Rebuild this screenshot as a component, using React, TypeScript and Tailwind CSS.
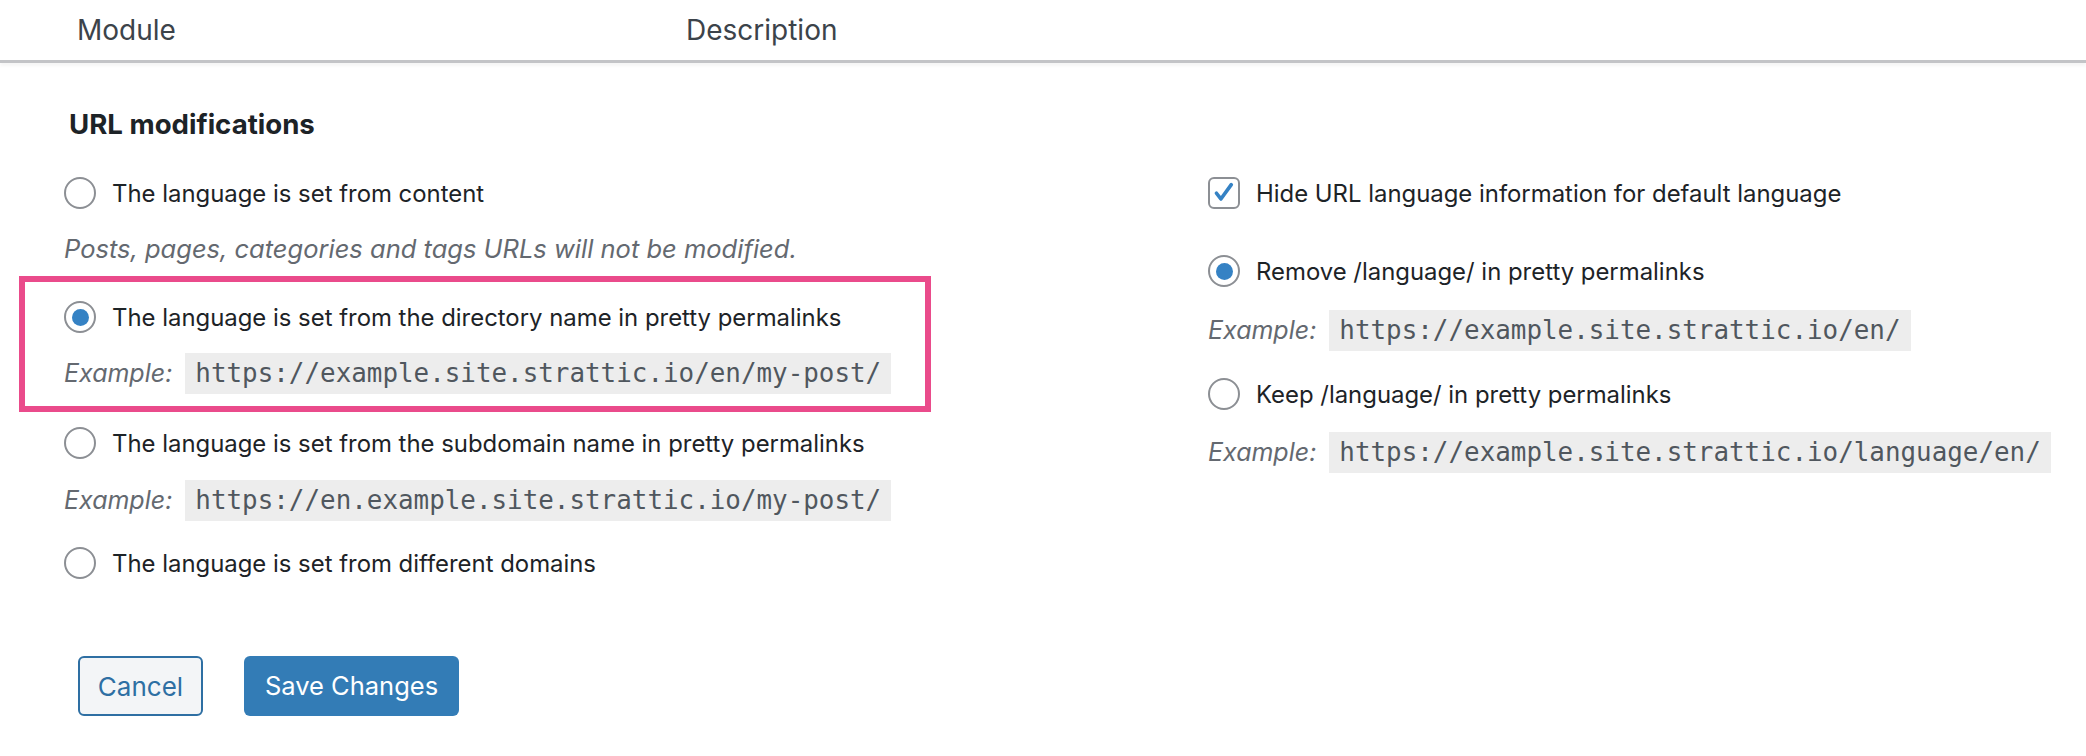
import React from "react";

const Radio = ({ checked = false }: { checked?: boolean }) => (
    <span className="w-[32px] h-[32px] shrink-0 rounded-full border-2 border-[#8c8f94] bg-white flex items-center justify-center">
        {checked && <span className="w-[17px] h-[17px] rounded-full bg-[#3582c4]" />}
    </span>
);

const Checkbox = () => (
    <span className="w-[32px] h-[32px] shrink-0 rounded-[6px] border-2 border-[#8c8f94] bg-white flex items-center justify-center">
        <svg width="26" height="26" viewBox="0 0 20 20">
            <path d="M4.2 10.2 L7.6 14.6 L15.6 3.6" fill="none" stroke="#3582c4" strokeWidth="2.8" strokeLinecap="round" strokeLinejoin="round" />
        </svg>
    </span>
);

const Option = ({ label, checked, box }: { label: string; checked?: boolean; box?: boolean }) => (
    <label className="flex items-center gap-[16px] h-[32px] text-[23.9px] text-[#1d2327]">
        {box ? <Checkbox /> : <Radio checked={checked} />}
        <span className="pt-[1px]">{label}</span>
    </label>
);

const Example = ({ url, className = "" }: { url: string; className?: string }) => (
    <div className={`flex items-center gap-[13px] ${className}`}>
        <span className="italic text-[25px] text-[#646970]">Example:</span>
        <code className="h-[41px] px-[10px] flex items-center bg-[#ededed] text-[#50575e] text-[25.9px] font-['DejaVu_Sans_Mono',monospace]">
            {url}
        </code>
    </div>
);

export default function App() {
    return (
        <div className="w-[2086px] h-[756px] bg-white font-['Inter',sans-serif] overflow-hidden">
            {/* table header */}
            <div className="h-[63px] flex items-center border-b-[3px] border-[#c3c4c7] shadow-[0_3px_3px_rgba(0,0,0,0.04)] text-[28px] text-[#3c434a]">
                <span className="pl-[77px] w-[686px]">Module</span>
                <span>Description</span>
            </div>

            <div className="pl-[64px]">
                <h2 className="mt-[43px] text-[27.6px] leading-[36px] font-bold text-[#1d2327] pl-[5px]">
                    URL modifications
                </h2>

                <div className="grid grid-cols-[1144px_1fr] mt-[35px]">
                    {/* left column */}
                    <div className="flex flex-col">
                        <Option label="The language is set from content" />
                        <p className="mt-[22px] italic text-[25.5px] leading-[36px] text-[#646970]">
                            Posts, pages, categories and tags URLs will not be modified.
                        </p>
                        <div className="mt-[9px] -ml-[45px] pl-[39px] w-[912px] border-[6px] border-[#ea4b8b] pt-[19px] pb-[12px]">
                            <Option label="The language is set from the directory name in pretty permalinks" checked />
                            <Example className="mt-[20px]" url="https://example.site.strattic.io/en/my-post/" />
                        </div>
                        <div className="mt-[15px]">
                            <Option label="The language is set from the subdomain name in pretty permalinks" />
                        </div>
                        <Example className="mt-[21px]" url="https://en.example.site.strattic.io/my-post/" />
                        <div className="mt-[26px]">
                            <Option label="The language is set from different domains" />
                        </div>
                    </div>

                    {/* right column */}
                    <div className="flex flex-col">
                        <Option label="Hide URL language information for default language" box />
                        <div className="mt-[46px]">
                            <Option label="Remove /language/ in pretty permalinks" checked />
                        </div>
                        <Example className="mt-[23px]" url="https://example.site.strattic.io/en/" />
                        <div className="mt-[27px]">
                            <Option label="Keep /language/ in pretty permalinks" />
                        </div>
                        <Example className="mt-[22px]" url="https://example.site.strattic.io/language/en/" />
                    </div>
                </div>

                <div className="flex gap-[41px] mt-[77px] ml-[14px]">
                    <button type="button" className="w-[125px] h-[60px] rounded-[6px] border-2 border-[#2e6fa3] bg-[#f3f5f7] text-[#2e6fa3] text-[26px]">
                        Cancel
                    </button>
                    <button type="button" className="w-[215px] h-[60px] rounded-[6px] bg-[#337cb6] text-white text-[25.5px]">
                        Save Changes
                    </button>
                </div>
            </div>
        </div>
    );
}
